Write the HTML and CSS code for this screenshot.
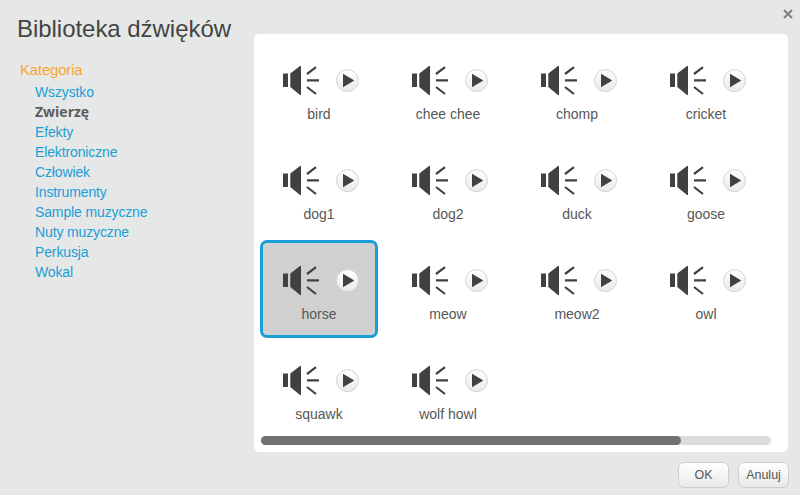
FILE: index.html
```
<!DOCTYPE html>
<html lang="pl">
<head>
<meta charset="utf-8">
<title>Biblioteka dźwięków</title>
<link rel="stylesheet" href="styles.css">
</head>
<body>
<svg width="0" height="0" class="defs">
  <defs>
    <linearGradient id="shade" x1="0" y1="0" x2="0" y2="1">
      <stop offset="0" stop-color="#fff"/>
      <stop offset="1" stop-color="#e9eaeb"/>
    </linearGradient>
    <symbol id="sound" viewBox="0 0 80 34">
      <path fill="#414141" d="M1 9.500h5v13.500H1zM8.300 9.500L18 2h1v29h-1L8.300 23z"/>
      <path fill="none" stroke="#414141" stroke-width="2.200" d="M25 10L34 3.200M25 16.300h12M25 23L34 30"/>
      <circle cx="65.500" cy="16.600" r="11" fill="url(#shade)" stroke="#d3d4d5"/>
      <path fill="#414141" d="M61 9.800v13.500l11.300-6.700z"/>
    </symbol>
  </defs>
</svg>
<div class="dialog">
  <aside class="sidebar">
    <h1 class="title">Biblioteka dźwięków</h1>
    <h2 class="heading">Kategoria</h2>
    <ul class="categories">
      <li>Wszystko</li>
      <li class="active">Zwierzę</li>
      <li>Efekty</li>
      <li>Elektroniczne</li>
      <li>Człowiek</li>
      <li>Instrumenty</li>
      <li>Sample muzyczne</li>
      <li>Nuty muzyczne</li>
      <li>Perkusja</li>
      <li>Wokal</li>
    </ul>
  </aside>
  <main class="main">
    <div class="topbar">
      <svg class="close" width="10" height="10" viewBox="0 0 10 10"><path d="M1 1l8 8M9 1l-8 8" stroke="#848484" stroke-width="2.200"/></svg>
    </div>
    <section class="panel">
      <div class="grid">
        <div class="tile"><svg class="icon"><use href="#sound"/></svg><span>bird</span></div>
        <div class="tile"><svg class="icon"><use href="#sound"/></svg><span>chee chee</span></div>
        <div class="tile"><svg class="icon"><use href="#sound"/></svg><span>chomp</span></div>
        <div class="tile"><svg class="icon"><use href="#sound"/></svg><span>cricket</span></div>
        <div class="tile"><svg class="icon"><use href="#sound"/></svg><span>dog1</span></div>
        <div class="tile"><svg class="icon"><use href="#sound"/></svg><span>dog2</span></div>
        <div class="tile"><svg class="icon"><use href="#sound"/></svg><span>duck</span></div>
        <div class="tile"><svg class="icon"><use href="#sound"/></svg><span>goose</span></div>
        <div class="tile selected"><svg class="icon"><use href="#sound"/></svg><span>horse</span></div>
        <div class="tile"><svg class="icon"><use href="#sound"/></svg><span>meow</span></div>
        <div class="tile"><svg class="icon"><use href="#sound"/></svg><span>meow2</span></div>
        <div class="tile"><svg class="icon"><use href="#sound"/></svg><span>owl</span></div>
        <div class="tile"><svg class="icon"><use href="#sound"/></svg><span>squawk</span></div>
        <div class="tile"><svg class="icon"><use href="#sound"/></svg><span>wolf howl</span></div>
      </div>
      <div class="track"><div class="thumb"></div></div>
    </section>
    <div class="actions">
      <button class="button">OK</button>
      <button class="button">Anuluj</button>
    </div>
  </main>
</div>
</body>
</html>
```
FILE: styles.css
```
* { box-sizing: border-box; }
body {
  margin: 0;
  background: #e6e8e7;
  color: #575757;
  font: 14px/20px "Liberation Sans", Arial, sans-serif;
}
.defs { position: absolute; }
.dialog { display: flex; width: 800px; height: 495px; overflow: hidden; }
.sidebar { width: 254px; padding-top: 14px; }
.title {
  margin: 0 0 0 17px;
  color: #444;
  font-size: 24px;
  font-weight: 400;
  line-height: 30px;
  letter-spacing: -0.04px;
  white-space: nowrap;
}
.heading {
  margin: 16px 0 2px 20px;
  color: #fba52d;
  font-size: 15px;
  font-weight: 400;
  line-height: 20px;
  letter-spacing: -0.2px;
}
.categories {
  margin: 0;
  padding: 0 0 0 35px;
  list-style: none;
  color: #1a9ed8;
  letter-spacing: -0.13px;
}
.categories li { height: 20px; }
.categories .active {
  color: #5c5c5c;
  font-family: "Open Sans", sans-serif;
  font-weight: 700;
  letter-spacing: 0;
}
.main { width: 534px; }
.topbar { display: flex; justify-content: flex-end; height: 34px; padding-top: 9px; }
.close { margin-right: -5px; }
.panel { height: 418px; padding: 6px; border-radius: 5px; background: #fff; }
.grid {
  display: grid;
  grid-template-columns: repeat(4, 118px);
  grid-auto-rows: 98px;
  gap: 2px 11px;
  height: 396px;
}
.tile {
  display: flex;
  flex-direction: column;
  align-items: center;
  padding-top: 21px;
  border: 3px solid transparent;
  border-radius: 7px;
}
.tile.selected { border-color: #1a9ed8; background: #d0d0d0; }
.icon { width: 80px; height: 34px; margin-left: 6px; flex: none; }
.tile span { margin-top: 6px; }
.track { width: 510px; height: 9px; margin: 0 0 0 1px; border-radius: 5px; background: #dbdcde; }
.thumb { width: 420px; height: 9px; border-radius: 5px; background: #707173; }
.actions { display: flex; justify-content: flex-end; gap: 9px; margin: 10px -1px 0 0; }
.button {
  width: 51px;
  height: 26px;
  padding: 0;
  border: 1px solid #cecfd0;
  border-radius: 6px;
  background: linear-gradient(#fff, #e7e9e8);
  color: #575757;
  font: 12.5px "Liberation Sans", Arial, sans-serif;
}
```
